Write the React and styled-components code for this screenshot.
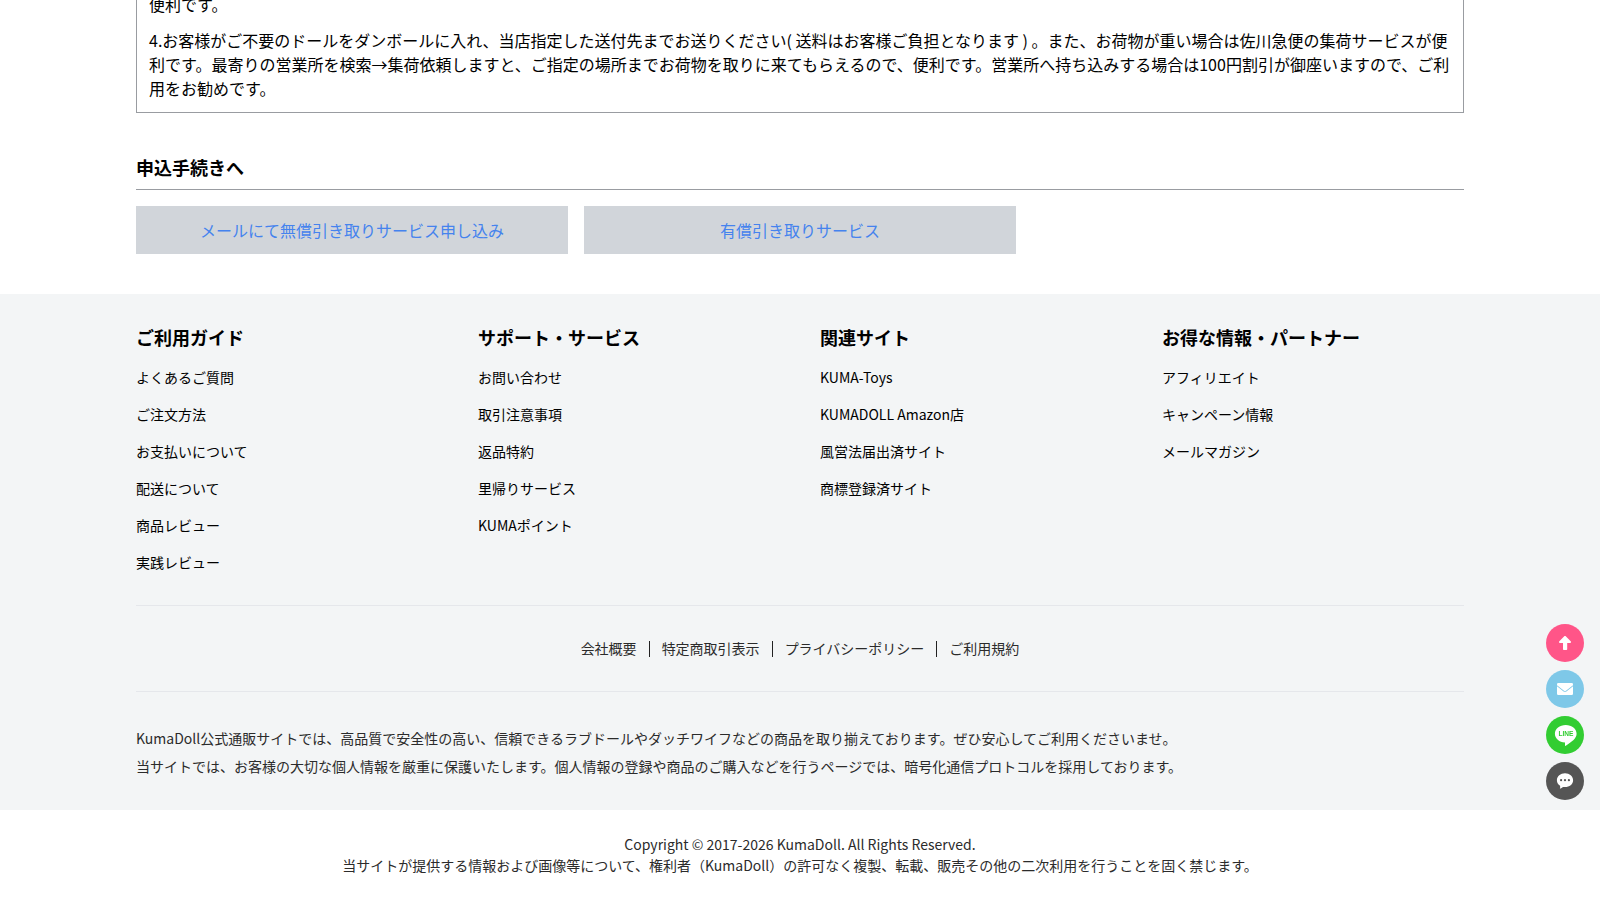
import React from 'react';
import styled, { createGlobalStyle } from 'styled-components';

const GlobalStyle = createGlobalStyle`
  * {
    box-sizing: border-box;
  }

  body {
    margin: 0;
    height: 900px;
    overflow: hidden;
    background: #fff;
    color: #000;
    font-family: "Noto Sans CJK JP", sans-serif;
    font-size: 16px;
    line-height: 24px;
  }

  a {
    color: inherit;
    text-decoration: none;
  }
`;

const Container = styled.div`
  display: flow-root;
  width: 1328px;
  margin: 0 auto;
`;

const StyledNotice = styled.div`
  margin-top: -8px;
  padding: 0 12px 12px;
  border: 1px solid #999ca1;
  border-top: 0;
`;

const NoticeText = styled.p`
  margin: 0;

  & + & {
    margin-top: 12px;
  }
`;

const SectionTitle = styled.h2`
  margin: 40px 0 16px;
  padding-bottom: 8px;
  border-bottom: 1px solid #999ca1;
  font-size: 18px;
  line-height: 28px;
  font-weight: 600;
`;

const ButtonGrid = styled.div`
  display: grid;
  grid-template-columns: repeat(3, 1fr);
  gap: 16px;
`;

const ServiceButton = styled.a`
  display: flex;
  align-items: center;
  justify-content: center;
  height: 48px;
  background: #d1d5da;
  && {
    color: #4583ee;
  }
`;

const StyledFooter = styled.footer`
  margin-top: 40px;
  height: 516px;
  padding-top: 29px;
  background: #f3f5f6;
  font-size: 14px;
`;

const FooterColumns = styled.div`
  display: grid;
  grid-template-columns: repeat(4, 1fr);
  gap: 40px;
`;

const ColumnTitle = styled.h3`
  margin: 0 0 8px;
  font-size: 18px;
  line-height: 28px;
  font-weight: 600;
`;

const LinkList = styled.ul`
  margin: 0;
  padding: 0;
  list-style: none;
`;

const LinkItem = styled.li`
  height: 37px;
  line-height: 37px;
`;

const PolicyNav = styled.nav`
  display: flex;
  align-items: center;
  justify-content: center;
  height: 87px;
  margin-top: 24px;
  border-top: 1px solid #e5e7eb;
  border-bottom: 1px solid #e5e7eb;
  color: #2b2b2b;
`;

const PolicyLink = styled.a`
  height: 16px;
  padding: 0 12px;
  line-height: 14px;

  & + & {
    border-left: 1px solid #222;
  }
`;

const AboutText = styled.div`
  padding-top: 32px;
  line-height: 28px;
  color: #2b2b2b;
`;

const Copyright = styled.div`
  padding-top: 24px;
  font-size: 14px;
  line-height: 21px;
  color: #2b2b2b;
  text-align: center;
`;

const FloatingMenu = styled.div`
  position: fixed;
  right: 16px;
  bottom: 100px;
  display: flex;
  flex-direction: column;
  gap: 8px;
`;

const RoundButton = styled.a`
  display: flex;
  align-items: center;
  justify-content: center;
  width: 38px;
  height: 38px;
  border-radius: 50%;
  background: ${props => props.$color};
`;

const columns = [
  {
    title: 'ご利用ガイド',
    links: ['よくあるご質問', 'ご注文方法', 'お支払いについて', '配送について', '商品レビュー', '実践レビュー'],
  },
  {
    title: 'サポート・サービス',
    links: ['お問い合わせ', '取引注意事項', '返品特約', '里帰りサービス', 'KUMAポイント'],
  },
  {
    title: '関連サイト',
    links: ['KUMA-Toys', 'KUMADOLL Amazon店', '風営法届出済サイト', '商標登録済サイト'],
  },
  {
    title: 'お得な情報・パートナー',
    links: ['アフィリエイト', 'キャンペーン情報', 'メールマガジン'],
  },
];

const policies = ['会社概要', '特定商取引表示', 'プライバシーポリシー', 'ご利用規約'];

const ArrowIcon = () => (
  <svg width="38" height="38" viewBox="0 0 38 38" fill="#fff">
    <path d="M18.5 12.1Q19 11.7 19.5 12.1L24.9 17.6Q25.4 18.9 24.2 19H21.2V25.3Q21.2 26.1 20.4 26.1H17.8Q17 26.1 17 25.3V19H13.8Q12.6 18.9 13.1 17.6Z" />
  </svg>
);

const MailIcon = () => (
  <svg width="38" height="38" viewBox="0 0 38 38" fill="#fff">
    <path d="M12.3 13H25.7Q27 13 27 14.3V15.2L20 20.7Q19 21.3 18 20.7L11 15.2V14.3Q11 13 12.3 13Z" />
    <path d="M11 16.3 17.6 21.4Q19 22.3 20.4 21.4L27 16.3V23.7Q27 25 25.7 25H12.3Q11 25 11 23.7Z" />
  </svg>
);

const LineIcon = () => (
  <svg width="38" height="38" viewBox="0 0 38 38">
    <path fill="#fff" d="M19.7 9C25.8 9 30.6 12.9 30.6 17.8 30.6 22.6 25.5 26 19.4 30 18.9 30.2 19 29.2 19 26.6 13.3 26.3 8.9 22.6 8.9 17.8 8.9 12.9 13.7 9 19.7 9Z" />
    <text x="19.9" y="20.4" textAnchor="middle" textLength="15" lengthAdjust="spacingAndGlyphs" fontFamily="Liberation Sans, sans-serif" fontWeight="700" fontSize="7.2" fill="#32cd32">LINE</text>
  </svg>
);

const ChatIcon = () => (
  <svg width="38" height="38" viewBox="0 0 38 38">
    <path fill="#fff" d="M19 11.3C23.5 11.3 27.1 14.3 27.1 18.2S23.5 25.1 19 25.1C18.3 25.1 17.6 25 17 24.9 16.2 25.8 15.2 26.4 13.9 26.7 14.2 25.8 14.3 24.8 14.1 23.8 12.2 22.6 10.9 20.5 10.9 18.2 10.9 14.3 14.5 11.3 19 11.3Z" />
    <g fill="#555">
      <circle cx="15.1" cy="18.2" r="1.1" />
      <circle cx="19" cy="18.2" r="1.1" />
      <circle cx="22.9" cy="18.2" r="1.1" />
    </g>
  </svg>
);

function App() {
  return (
    <>
      <GlobalStyle />
      <Container>
        <StyledNotice>
          <NoticeText>便利です。</NoticeText>
          <NoticeText>
            4.お客様がご不要のドールをダンボールに入れ、当店指定した送付先までお送りください( 送料はお客様ご負担となります ) 。また、お荷物が重い場合は佐川急便の集荷サービスが便利です。最寄りの営業所を検索→集荷依頼しますと、ご指定の場所までお荷物を取りに来てもらえるので、便利です。営業所へ持ち込みする場合は100円割引が御座いますので、ご利用をお勧めです。
          </NoticeText>
        </StyledNotice>
        <SectionTitle>申込手続きへ</SectionTitle>
        <ButtonGrid>
          <ServiceButton href="#">メールにて無償引き取りサービス申し込み</ServiceButton>
          <ServiceButton href="#">有償引き取りサービス</ServiceButton>
        </ButtonGrid>
      </Container>
      <StyledFooter>
        <Container>
          <FooterColumns>
            {columns.map(column => (
              <div key={column.title}>
                <ColumnTitle>{column.title}</ColumnTitle>
                <LinkList>
                  {column.links.map(link => (
                    <LinkItem key={link}><a href="#">{link}</a></LinkItem>
                  ))}
                </LinkList>
              </div>
            ))}
          </FooterColumns>
          <PolicyNav>
            {policies.map(policy => (
              <PolicyLink key={policy} href="#">{policy}</PolicyLink>
            ))}
          </PolicyNav>
          <AboutText>
            <div>KumaDoll公式通販サイトでは、高品質で安全性の高い、信頼できるラブドールやダッチワイフなどの商品を取り揃えております。ぜひ安心してご利用くださいませ。</div>
            <div>当サイトでは、お客様の大切な個人情報を厳重に保護いたします。個人情報の登録や商品のご購入などを行うページでは、暗号化通信プロトコルを採用しております。</div>
          </AboutText>
        </Container>
      </StyledFooter>
      <Copyright>
        <div>Copyright © 2017-2026 KumaDoll. All Rights Reserved.</div>
        <div>当サイトが提供する情報および画像等について、権利者（KumaDoll）の許可なく複製、転載、販売その他の二次利用を行うことを固く禁じます。</div>
      </Copyright>
      <FloatingMenu>
        <RoundButton href="#" $color="#ff5588"><ArrowIcon /></RoundButton>
        <RoundButton href="#" $color="#7ec8e8"><MailIcon /></RoundButton>
        <RoundButton href="#" $color="#32cd32"><LineIcon /></RoundButton>
        <RoundButton href="#" $color="#555"><ChatIcon /></RoundButton>
      </FloatingMenu>
    </>
  );
}

export default App;
